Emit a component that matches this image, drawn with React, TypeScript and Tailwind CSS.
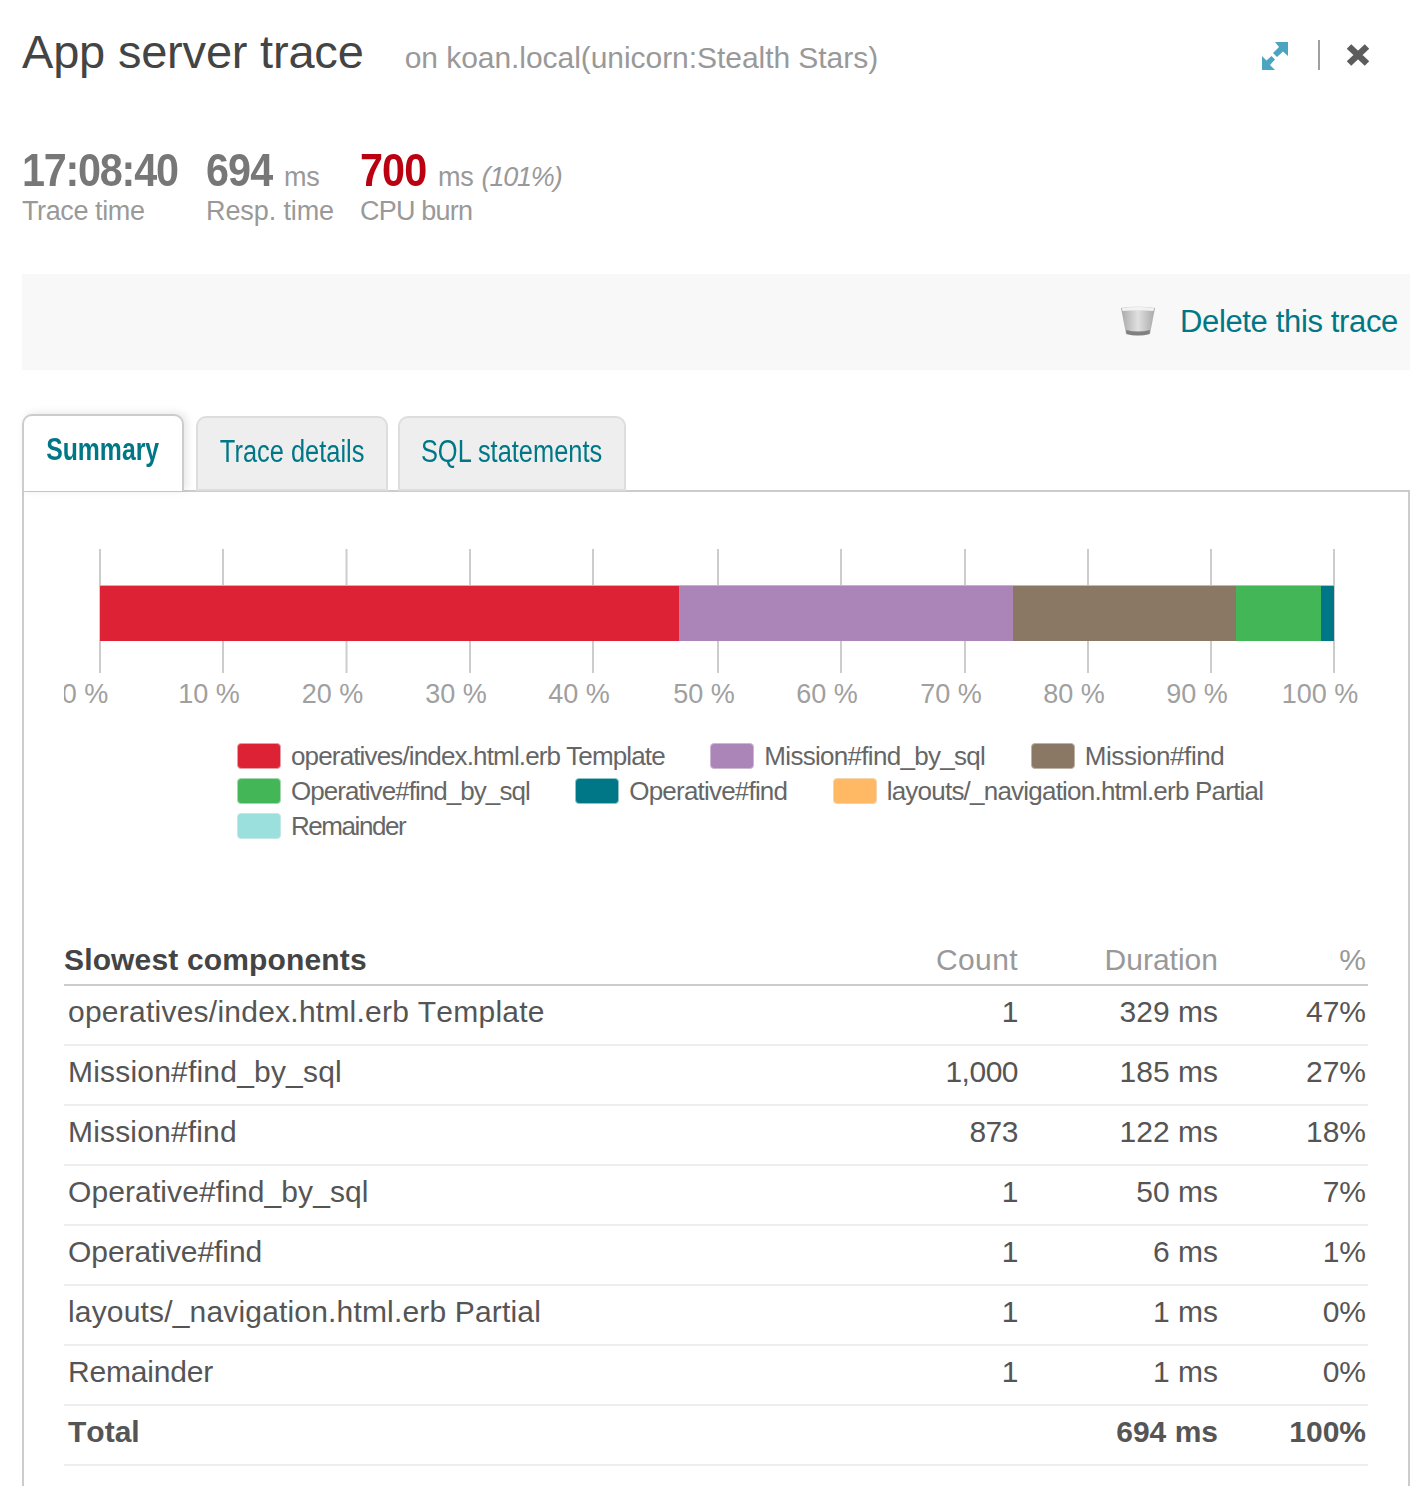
const ticks = [0, 10, 20, 30, 40, 50, 60, 70, 80, 90, 100];
const tickX = [100, 223, 346.5, 470, 593, 718, 841, 965, 1088, 1211, 1334];

const segments = [
  { x: 100, w: 579, color: '#dc2234' },
  { x: 679, w: 334, color: '#ab85b8' },
  { x: 1013, w: 223, color: '#8a7764' },
  { x: 1236, w: 85, color: '#43b757' },
  { x: 1321, w: 13, color: '#007787' },
];

const legend = [
  { label: 'operatives/index.html.erb Template', swatch: 'bg-[#dc2234] border-[#e4a0a8]', tracking: 'tracking-[-0.85px]' },
  { label: 'Mission#find_by_sql', swatch: 'bg-[#ab85b8] border-[#cdb8d4]', tracking: 'tracking-[-0.7px]' },
  { label: 'Mission#find', swatch: 'bg-[#8a7764] border-[#bdb2a6]', tracking: 'tracking-[-0.4px]' },
  { label: 'Operative#find_by_sql', swatch: 'bg-[#43b757] border-[#a5d8ad]', tracking: 'tracking-[-0.95px]' },
  { label: 'Operative#find', swatch: 'bg-[#007787] border-[#8fc2c9]', tracking: 'tracking-[-0.8px]' },
  { label: 'layouts/_navigation.html.erb Partial', swatch: 'bg-[#ffb964] border-[#f0d5b0]', tracking: 'tracking-[-0.78px]' },
  { label: 'Remainder', swatch: 'bg-[#9be0dd] border-[#c4e6e4]', tracking: 'tracking-[-1.45px]' },
];

const rows = [
  { name: 'operatives/index.html.erb Template', count: '1', duration: '329 ms', pct: '47%', tracking: 'tracking-[0.24px]' },
  { name: 'Mission#find_by_sql', count: '1,000', duration: '185 ms', pct: '27%', tracking: 'tracking-[0.2px]' },
  { name: 'Mission#find', count: '873', duration: '122 ms', pct: '18%', tracking: 'tracking-[0.17px]' },
  { name: 'Operative#find_by_sql', count: '1', duration: '50 ms', pct: '7%', tracking: 'tracking-[0.1px]' },
  { name: 'Operative#find', count: '1', duration: '6 ms', pct: '1%', tracking: 'tracking-[-0.07px]' },
  { name: 'layouts/_navigation.html.erb Partial', count: '1', duration: '1 ms', pct: '0%', tracking: 'tracking-[0.17px]' },
  { name: 'Remainder', count: '1', duration: '1 ms', pct: '0%', tracking: 'tracking-[-0.2px]' },
];

function ExpandIcon() {
  return (
    <svg width="26" height="28" viewBox="0 0 26 28" className="mt-[2px] block blur-[0.4px]">
      <path d="M13 0 H26 V14 L21 9.5 L15 15 L11 11 L17 5 Z" fill="#4ba5c1" />
      <path d="M0 28 V14 L4.5 18.5 L9.5 14 L13 17.5 L8 23 L13 28 Z" fill="#4ba5c1" />
    </svg>
  );
}

function CloseIcon() {
  return (
    <svg width="24" height="22" viewBox="0 0 24 22" className="mt-[4px] block blur-[0.4px]">
      <path d="M3 2.5 L21 19.5 M21 2.5 L3 19.5" stroke="#5c5c5c" strokeWidth="6.5" />
    </svg>
  );
}

function TrashIcon() {
  return (
    <svg width="34" height="30" viewBox="0 0 34 30" className="-mt-[3px] block blur-[0.5px]">
      <defs>
        <linearGradient id="can" x1="0" x2="1" y1="0" y2="0">
          <stop offset="0" stopColor="#a8a8a8" />
          <stop offset="0.5" stopColor="#e0e0e0" />
          <stop offset="1" stopColor="#a8a8a8" />
        </linearGradient>
      </defs>
      <path d="M0 2 Q17 -1 34 2 L29 28 Q17 31 5 28 Z" fill="url(#can)" />
      <path d="M1 2 Q17 0 33 2 L32.5 5 Q17 3.5 1.5 5 Z" fill="#f2f2f2" />
      <path d="M5 24 Q17 27 29 24 L28.5 28 Q17 31 5.5 28 Z" fill="#808080" />
    </svg>
  );
}

function Chart() {
  return (
    <svg width="1304" height="170" viewBox="64 540 1304 170" className="block">
      {tickX.map((x) => (
        <line key={x} x1={x} x2={x} y1="549" y2="673" stroke="#cccccc" strokeWidth="2" />
      ))}
      <rect x="100" y="585" width="1234" height="56" fill="#bbbbbb" />
      {segments.map((s) => (
        <rect key={s.x} x={s.x} y="586" width={s.w} height="55" fill={s.color} />
      ))}
      {ticks.map((t, i) => (
        <text
          key={t}
          x={tickX[i] - (t === 0 ? 15 : 14)}
          y="703"
          textAnchor="middle"
          fontSize="27"
          fill="#a0a0a0"
        >
          {t} %
        </text>
      ))}
    </svg>
  );
}

export default function App() {
  return (
    <div className="h-[1486px] overflow-hidden bg-white pl-[22px] pr-[14px] font-['Liberation_Sans',Arial,sans-serif]">
      <div className="flex h-[112px] items-start pt-[22px]">
        <h1 className="text-[47px] leading-[60px] tracking-[-0.2px] text-[#444444]">App server trace</h1>
        <span className="ml-[41px] mt-[16px] text-[30px] leading-[40px] tracking-[-0.05px] text-[#999999]">
          on koan.local(unicorn:Stealth Stars)
        </span>
        <div className="ml-auto mr-[40px] mt-[18px] flex items-start">
          <ExpandIcon />
          <div className="ml-[30px] mr-[26px] h-[30px] w-[2px] bg-[#a0a0a0]" />
          <CloseIcon />
        </div>
      </div>

      <div className="mt-[30px] flex h-[132px] items-start">
        <div className="w-[184px]">
          <div className="h-[56px] origin-left scale-x-[0.88] text-[47px] font-bold leading-[56px] tracking-[-1.4px] text-[#777777]">17:08:40</div>
          <div className="text-[27px] leading-[26px] tracking-[-0.4px] text-[#999999]">Trace time</div>
        </div>
        <div className="w-[154px]">
          <div className="flex h-[56px] items-baseline">
            <span className="w-[78px] origin-left scale-x-[0.88] text-[47px] font-bold leading-[56px] tracking-[-1px] text-[#777777]">694</span>
            <span className="text-[27px] tracking-[-0.2px] text-[#999999]">ms</span>
          </div>
          <div className="text-[27px] leading-[26px] tracking-[-0.1px] text-[#999999]">Resp. time</div>
        </div>
        <div>
          <div className="flex h-[56px] items-baseline">
            <span className="w-[78px] origin-left scale-x-[0.88] text-[47px] font-bold leading-[56px] tracking-[-1px] text-[#bb0011]">700</span>
            <span className="text-[27px] tracking-[-0.2px] text-[#999999]">ms</span>
            <span className="ml-[8px] text-[27px] italic tracking-[-1.2px] text-[#999999]">(101%)</span>
          </div>
          <div className="text-[27px] leading-[26px] tracking-[-0.8px] text-[#999999]">CPU burn</div>
        </div>
      </div>

      <div className="flex h-[96px] items-center justify-end bg-[#f8f8f8] pr-[12px]">
        <TrashIcon />
        <a className="ml-[25px] text-[31px] tracking-[-0.35px] text-[#007787]">Delete this trace</a>
      </div>

      <div className="relative z-10 mt-[44px] flex h-[77px] items-end">
        <div className="relative z-10 flex h-[77px] w-[162px] items-start justify-center rounded-t-[10px] border-2 border-b-0 border-[#cccccc] bg-white pt-[15px] shadow-[3px_-1px_8px_rgba(0,0,0,0.1)]">
          <span className="inline-block scale-x-[0.8] text-[31px] font-bold leading-[38px] whitespace-nowrap text-[#007787]">Summary</span>
        </div>
        <div className="ml-[12px] flex h-[75px] w-[192px] items-start justify-center rounded-t-[10px] border-2 border-[#dddddd] bg-[#eeeeee] pt-[15px]">
          <span className="inline-block scale-x-[0.82] text-[31px] leading-[38px] whitespace-nowrap text-[#007787]">Trace details</span>
        </div>
        <div className="ml-[10px] flex h-[75px] w-[228px] items-start justify-center rounded-t-[10px] border-2 border-[#dddddd] bg-[#eeeeee] pt-[15px]">
          <span className="inline-block scale-x-[0.82] text-[31px] leading-[38px] whitespace-nowrap text-[#007787]">SQL statements</span>
        </div>
      </div>

      <div className="-mt-[1px] h-[1100px] border-2 border-[#cccccc] bg-white pl-[40px] pr-[40px] pt-[48px]">
        <Chart />

        <div className="ml-[173px] mt-[33px] flex flex-wrap gap-x-[45.5px] gap-y-[9px]">
          {legend.map((item) => (
            <div key={item.label} className="flex h-[26px] items-center">
              <span className={`h-[26px] w-[44px] rounded-[4px] border ${item.swatch}`} />
              <span className={`ml-[10px] text-[26px] leading-[26px] text-[#666666] ${item.tracking}`}>{item.label}</span>
            </div>
          ))}
        </div>

        <table className="mt-[96px] w-full border-collapse text-[30px] text-[#555555] [font-kerning:none]">
          <thead>
            <tr className="h-[50px] border-b-2 border-[#cccccc] text-[#999999]">
              <th className="text-left font-bold tracking-[0.15px] text-[#444444]">Slowest components</th>
              <th className="w-[120px] pr-[2px] text-right font-normal tracking-[0.4px]">Count</th>
              <th className="w-[200px] pr-[2px] text-right font-normal">Duration</th>
              <th className="w-[148px] pr-[2px] text-right font-normal">%</th>
            </tr>
          </thead>
          <tbody>
            {rows.map((r) => (
              <tr key={r.name} className="h-[60px] border-b-2 border-[#eeeeee]">
                <td className={`pb-[8px] pl-[4px] ${r.tracking}`}>{r.name}</td>
                <td className="pb-[8px] pr-[2px] text-right tracking-[-0.5px]">{r.count}</td>
                <td className="pb-[8px] pr-[2px] text-right">{r.duration}</td>
                <td className="pb-[8px] pr-[2px] text-right">{r.pct}</td>
              </tr>
            ))}
            <tr className="h-[60px] border-b-2 border-[#eeeeee] font-bold">
              <td className="pb-[8px] pl-[4px]">Total</td>
              <td />
              <td className="pb-[8px] pr-[2px] text-right">694 ms</td>
              <td className="pb-[8px] pr-[2px] text-right">100%</td>
            </tr>
          </tbody>
        </table>
      </div>
    </div>
  );
}
